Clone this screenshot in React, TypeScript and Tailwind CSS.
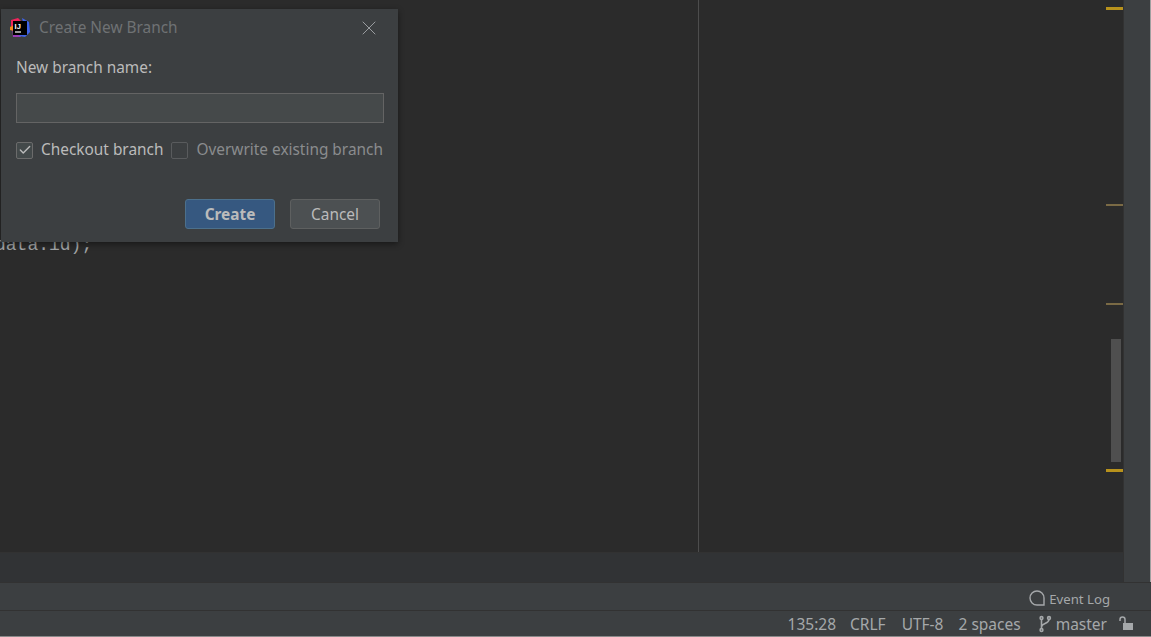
import { Check, X } from 'lucide-react'

const font = "[font-family:'Noto_Sans',sans-serif]"

function Logo() {
  return (
    <svg width="20" height="20" viewBox="0 0 20 20" className="shrink-0">
      <path d="M1 2 L8 0 L12 4 L4 11 L1 8 Z" fill="#f0245c" />
      <path d="M2 9 L3 19 L11 19 L6 8 Z" fill="#9a3bb5" />
      <path d="M0 9 L4 7 L4 13 L0 12 Z" fill="#f58a1f" />
      <path d="M12 0 L19 4 L20 14 L15 19 L9 18 L14 8 Z" fill="#3f63e8" />
      <rect x="3" y="3" width="14" height="14" fill="#000" />
      <text x="4.6" y="10.6" fontSize="7.5" fontWeight="700" fill="#fff" className="[font-family:'Liberation_Sans',sans-serif]">IJ</text>
      <rect x="5" y="13.4" width="6" height="1.2" fill="#fff" />
    </svg>
  )
}

function Dialog() {
  return (
    <div className={`absolute left-[1px] top-[9px] w-[397px] h-[233px] bg-[#3c3f41] flex flex-col shadow-[0_2px_6px_rgba(0,0,0,0.45)] ${font}`}>
      <div className="h-[37px] flex items-center pl-[9px] pr-[17px] shrink-0">
        <Logo />
        <span className="ml-[9px] text-[15.4px] text-[#6f7274] flex-1">Create New Branch</span>
        <X size={24} strokeWidth={1} className="text-[#9a9da0]" />
      </div>
      <div className="px-[15px] flex flex-col">
        <div className="mt-[12px] text-[15.4px] leading-[20px] text-[#bbbbbb]">New branch name:</div>
        <div className="mt-[15px] w-[368px] h-[30px] bg-[#45494a] border border-[#646464]" />
        <div className="mt-[17px] flex items-center h-[20px] text-[15.4px] whitespace-nowrap">
          <div className="w-[17px] h-[17px] bg-[#43494a] border border-[#6b6b6b] rounded-[2px] flex items-center justify-center">
            <Check size={14} strokeWidth={2.4} className="text-[#bbbbbb]" />
          </div>
          <span className="ml-[8px] text-[#bbbbbb]">Checkout branch</span>
          <div className="ml-[8px] w-[17px] h-[17px] bg-[#3c3f41] border border-[#595b5d] rounded-[2px]" />
          <span className="ml-[8px] text-[#8a8c8e]">Overwrite existing branch</span>
        </div>
      </div>
      <div className="mt-[39px] flex justify-end gap-[15px] pr-[18px] text-[15.4px]">
        <div className="w-[90px] h-[30px] pt-[2px] bg-[#365880] border border-[#4c708c] rounded-[3px] flex items-center justify-center font-bold text-[#bbbbbb]">Create</div>
        <div className="w-[90px] h-[30px] pt-[2px] bg-[#4c5052] border border-[#5e6060] rounded-[3px] flex items-center justify-center text-[#bbbbbb]">Cancel</div>
      </div>
    </div>
  )
}

export default function App() {
  return (
    <div className={`relative w-[1151px] h-[637px] overflow-hidden flex flex-col bg-[#3c3f41] ${font}`}>
      <div className="flex h-[582px] shrink-0">
        <div className="w-[1123px] flex flex-col">
          <div className="relative h-[553px] bg-[#2b2b2b] flex border-b border-[#323232]">
            <div className="w-[699px] border-r border-[#4d4d4d] h-full" />
            <div className="absolute left-0 top-[233px] text-[#a0a3a5] text-[18px] leading-[24px] -ml-[5px] [font-family:'Liberation_Mono',monospace]">data.id);</div>
            {/* error stripe marks */}
            <div className="absolute left-[1106px] top-[7px] w-[17px] h-[3px] bg-[#b8921c]" />
            <div className="absolute left-[1106px] top-[204px] w-[17px] h-[2px] bg-[#7a6a45]" />
            <div className="absolute left-[1106px] top-[303px] w-[17px] h-[2px] bg-[#7a6a45]" />
            <div className="absolute left-[1106px] top-[469px] w-[17px] h-[3px] bg-[#b8921c]" />
            <div className="absolute left-[1111px] top-[339px] w-[10px] h-[123px] bg-[#4f4f4f]" />
          </div>
          <div className="flex-1 bg-[#313335]" />
        </div>
        <div className="flex-1 bg-[#3c3f41] border-l border-[#323232] border-r-[1px] border-r-[#a0a0a0]" />
      </div>
      <div className="h-[28px] border-t border-[#323232] flex items-center justify-end pr-[41px] pt-[6px] text-[13.2px] text-[#a5a8aa] shrink-0">
        <svg width="18" height="18" viewBox="0 0 18 18" fill="none" stroke="#a5a8aa" strokeWidth="1.4" className="mr-[3px] -mt-[3px] -ml-[2px]">
          <path d="M9 2 a7 7 0 0 1 7 7 v7 h-7 a7 7 0 0 1 0 -14 Z" />
        </svg>
        Event Log
      </div>
      <div className="h-[26px] border-t border-[#323232] flex items-center text-[15.5px] text-[#a5a8aa] shrink-0 pr-[17px] pt-[2px] justify-end whitespace-nowrap">
        <span>135:28</span>
        <span className="ml-[14px]">CRLF</span>
        <span className="ml-[16px]">UTF-8</span>
        <span className="ml-[15px]">2 spaces</span>
        <svg width="14" height="18" viewBox="0 0 14 18" fill="none" stroke="#a5a8aa" strokeWidth="1.6" className="ml-[17px] -mt-[2px]">
          <circle cx="3.5" cy="3" r="1.4" />
          <circle cx="11" cy="3" r="1.4" />
          <circle cx="3.5" cy="15" r="1.4" />
          <path d="M3.5 4.5 V13.5 M11 4.5 C11 9 3.5 8 3.5 12" />
        </svg>
        <span className="ml-[4px]">master</span>
        <svg width="15" height="15" viewBox="0 0 15 15" className="ml-[12px] -mt-[2px]">
          <rect x="4" y="7" width="10" height="7" fill="#a5a8aa" />
          <path d="M1 5 V3.5 a2.5 2.5 0 0 1 5 0 V7" fill="none" stroke="#a5a8aa" strokeWidth="1.5" />
        </svg>
      </div>
      <div className="flex-1 bg-[#8a8a8a]" />
      <Dialog />
    </div>
  )
}
